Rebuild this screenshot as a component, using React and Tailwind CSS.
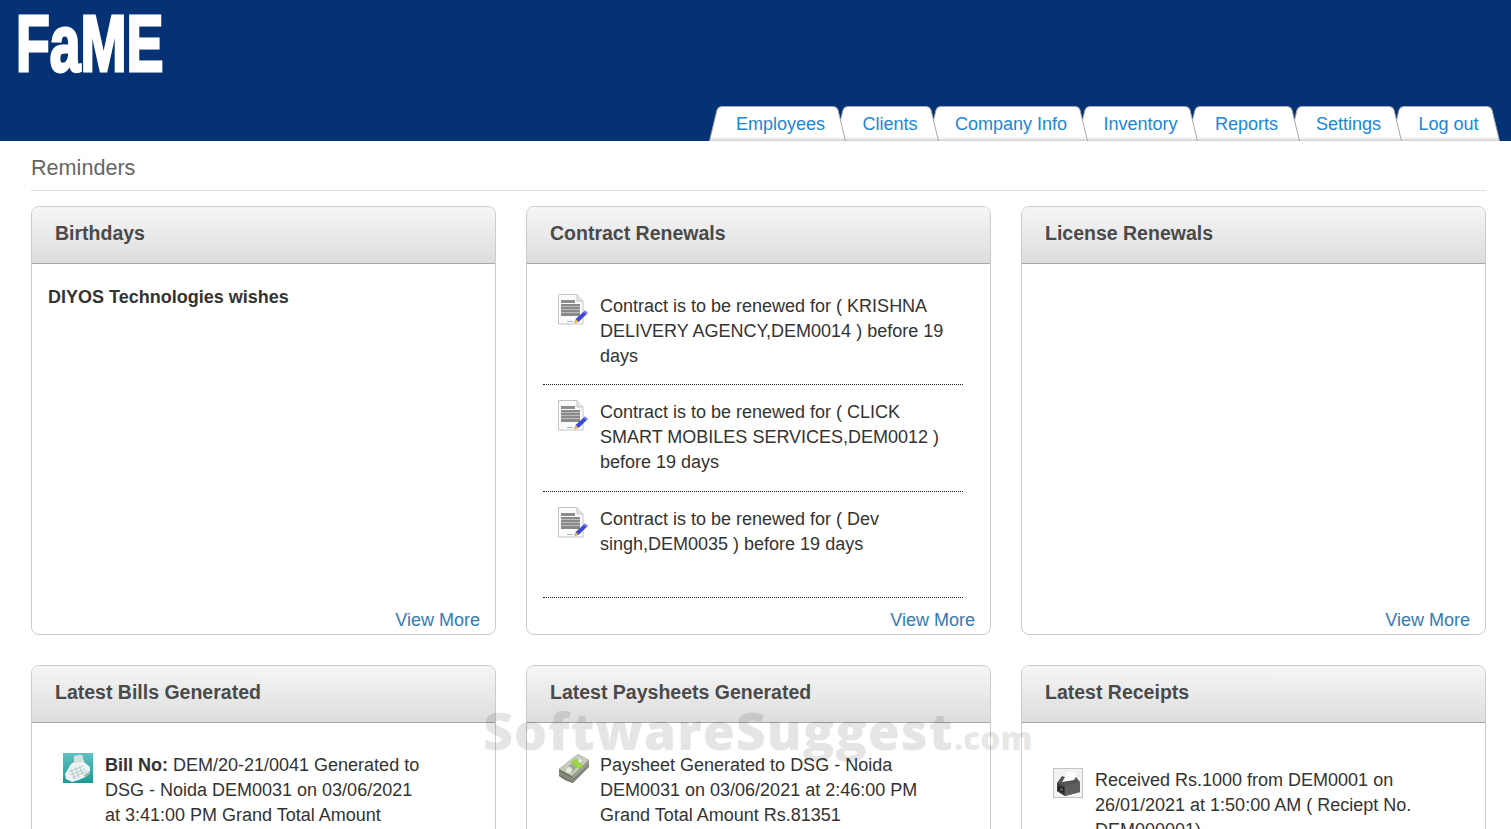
const TABS = [
  { id: "employees", label: "Employees", width: 137, z: "z-[7]" },
  { id: "clients", label: "Clients", width: 104, z: "z-[6]" },
  { id: "company", label: "Company Info", width: 160, z: "z-[5]" },
  { id: "inventory", label: "Inventory", width: 121, z: "z-[4]" },
  { id: "reports", label: "Reports", width: 113, z: "z-[3]" },
  { id: "settings", label: "Settings", width: 113, z: "z-[2]" },
  { id: "logout", label: "Log out", width: 109, z: "z-[1]" },
]

function Tab({ id, label, width, z }) {
  const h = 35
  const d = `M0.5 ${h} L8 4 Q9 0.5 13 0.5 L${width - 13} 0.5 Q${width - 9} 0.5 ${width - 8} 4 L${width - 0.5} ${h}`
  return (
    <div className={`relative flex h-[35px] items-center justify-center pl-[6px] pt-[2px] not-first:-ml-[11px] ${z}`} style={{ width }}>
      <svg className="absolute inset-0" width={width} height={h}>
        <defs>
          <linearGradient id={`tab-${id}`} x1="0" y1="0" x2="0" y2="1">
            <stop offset="0.88" stopColor="#ffffff" />
            <stop offset="1" stopColor="#cfcfcf" />
          </linearGradient>
        </defs>
        <path d={`${d} Z`} fill={`url(#tab-${id})`} />
        <path d={d} fill="none" stroke="#a9a9a9" strokeWidth="1" />
      </svg>
      <a className="relative text-[18px] leading-[25px] text-[#1a87d8]">{label}</a>
    </div>
  )
}

function DocIcon() {
  return (
    <svg width="30" height="31" viewBox="0 0 30 31" className="shrink-0">
      <path d="M0.5 0.5H19L25 7V30H0.5Z" fill="#fbfbfb" stroke="#c4c4c4" />
      <path d="M19 0.5V7H25" fill="#e6e6e6" stroke="#c4c4c4" />
      <rect x="3" y="6" width="14" height="3" fill="#8d8d8d" />
      <rect x="3" y="10" width="19" height="12" fill="#8a8a8a" />
      <path d="M3 12.5H22M3 15.5H22M3 18.5H22" stroke="#c8c8c8" strokeWidth="0.8" />
      <path d="M17.5 25L27 16.5L29.8 19L20.5 28Z" fill="#3b49d6" />
      <path d="M27 16.5L29.8 19L28.3 20.3L25.6 17.8Z" fill="#7f88ec" />
      <path d="M17.5 25L20.5 28L16 29.5Z" fill="#e0b040" />
      <path d="M9 27.5H15" stroke="#a8b4e0" strokeWidth="1" />
    </svg>
  )
}

function CalcIcon() {
  return (
    <svg width="30" height="30" viewBox="0 0 30 30" className="shrink-0">
      <defs>
        <linearGradient id="calc-bg" x1="0" y1="0" x2="0" y2="1">
          <stop offset="0" stopColor="#62c2c2" />
          <stop offset="1" stopColor="#1b9a92" />
        </linearGradient>
      </defs>
      <rect width="30" height="30" fill="url(#calc-bg)" />
      <path d="M11 3L19 2L21 9L27 14L27 20Q22 26 9 29L3 26L2 21L8 11L11 9Z" fill="#eef4f4" />
      <path d="M11 3L19 2L21 9L11 10Z" fill="#d5e2e2" />
      <path d="M6 19L20 13M7 22L22 16M9 25L24 18M8 16L12 26M12 14L16 25M16 13L20 22" stroke="#b4c6c6" strokeWidth="1" />
      <path d="M21 22L27 18V20L22 25Z" fill="#9fb4b4" />
    </svg>
  )
}

function MoneyIcon() {
  return (
    <svg width="32" height="31" viewBox="0 0 32 31" className="shrink-0">
      <path d="M1 16L20 1L31 7V14L15 30Q7 28 1 23Z" fill="#6f7467" />
      <path d="M1 16L20 1L31 7L14 23Z" fill="#c6ccbc" />
      <path d="M7 16L19 6L25 9L13 20Z" fill="#a3aa98" />
      <circle cx="11" cy="17" r="3" fill="#e6e9de" />
      <circle cx="22" cy="8" r="2" fill="#e6e9de" />
      <path d="M13 9L17 6L27 14L23 18Z" fill="#9ad83c" />
      <path d="M14 23L31 7V10L15 26Z" fill="#989d8e" />
      <path d="M1 19L14 26L31 11M1 21L15 28L31 13" stroke="#a9ae9f" strokeWidth="0.7" fill="none" />
    </svg>
  )
}

function PrinterIcon() {
  return (
    <svg width="30" height="30" viewBox="0 0 30 30" className="shrink-0">
      <rect x="0.5" y="0.5" width="29" height="29" fill="#f2f2f2" stroke="#c4c4c4" />
      <path d="M14 3L23 5L21 13L11 14Z" fill="#ffffff" />
      <path d="M4 15L9 8L12 9L9 14L21 12L23 9L27 14V24L12 28L4 23Z" fill="#555555" />
      <path d="M4 15L12 18V28L4 23Z" fill="#3d3d3d" />
      <path d="M12 18L27 14V24L12 28Z" fill="#5f5f5f" />
      <path d="M5 18L11 20V25L5 22Z" fill="#1f1f1f" />
      <path d="M7 20L10 21V23L7 22Z" fill="#6a6a6a" />
    </svg>
  )
}

function Card({ title, children, viewMore }) {
  return (
    <div className="flex h-[429px] flex-col overflow-hidden rounded-lg border border-[#cccccc]">
      <div className="h-[57px] shrink-0 border-b border-[#a8a8a8] bg-gradient-to-b from-[#f6f6f6] to-[#dddddd] pl-[23px] pt-[14px] text-[19.5px] font-bold leading-[25px] text-[#4a4a4a]">
        {title}
      </div>
      <div className="flex-1">{children}</div>
      {viewMore && (
        <a className="self-end pb-[1px] pr-[15px] text-[18px] leading-[25px] text-[#337ab7]">View More</a>
      )}
    </div>
  )
}

function ContractRow({ size, children }) {
  return (
    <div className={`flex gap-3 border-b border-dotted border-[#222222] pl-[15px] ${size}`}>
      <DocIcon />
      <p className="w-[355px]">{children}</p>
    </div>
  )
}

export default function App() {
  return (
    <div className="relative h-[829px] w-full overflow-hidden bg-white font-['Liberation_Sans',Arial,sans-serif] text-[18px] leading-[25px] text-[#333333]">
      <header className="flex h-[141px] items-end justify-between bg-[#053175] pr-[11px]">
        <div className="h-full pl-[16px] pt-[5px]">
          <span className="block origin-left scale-x-[0.7] text-[79px] font-bold leading-[78px] text-white [-webkit-text-stroke:3px_white]">
            FaME
          </span>
        </div>
        <nav className="flex">
          {TABS.map((tab) => (
            <Tab key={tab.id} {...tab} />
          ))}
        </nav>
      </header>

      <main className="pl-[31px] pr-[25px]">
        <h1 className="flex h-[50px] items-end border-b border-[#dddddd] pb-[7px] text-[21.6px] font-normal leading-[30px] text-[#666666]">
          Reminders
        </h1>

        <div className="mt-[15px] grid grid-cols-3 gap-[30px]">
          <Card title="Birthdays" viewMore>
            <p className="pl-[16px] pt-[21px] font-bold">DIYOS Technologies wishes</p>
          </Card>

          <Card title="Contract Renewals" viewMore>
            <div className="ml-[16px] mr-[27px] pt-[14px]">
              <ContractRow size="h-[107px] pt-[16px]">Contract is to be renewed for ( KRISHNA DELIVERY AGENCY,DEM0014 ) before 19 days</ContractRow>
              <ContractRow size="h-[107px] pt-[15px]">Contract is to be renewed for ( CLICK SMART MOBILES SERVICES,DEM0012 ) before 19 days</ContractRow>
              <ContractRow size="h-[106px] pt-[15px]">Contract is to be renewed for ( Dev singh,DEM0035 ) before 19 days</ContractRow>
            </div>
          </Card>

          <Card title="License Renewals" viewMore />

          <Card title="Latest Bills Generated">
            <div className="flex gap-3 pl-[31px] pt-[30px]">
              <CalcIcon />
              <p className="w-[320px]">
                <b>Bill No:</b> DEM/20-21/0041 Generated to DSG - Noida DEM0031 on 03/06/2021 at 3:41:00 PM Grand Total Amount
              </p>
            </div>
          </Card>

          <Card title="Latest Paysheets Generated">
            <div className="flex gap-[10px] pl-[31px] pt-[30px]">
              <MoneyIcon />
              <p className="w-[330px]">Paysheet Generated to DSG - Noida DEM0031 on 03/06/2021 at 2:46:00 PM Grand Total Amount Rs.81351</p>
            </div>
          </Card>

          <Card title="Latest Receipts">
            <div className="flex gap-3 pl-[31px] pt-[45px]">
              <PrinterIcon />
              <p className="w-[330px]">Received Rs.1000 from DEM0001 on 26/01/2021 at 1:50:00 AM ( Reciept No. DEM000001)</p>
            </div>
          </Card>
        </div>
      </main>

      {/* watermark over the page */}
      <div className="pointer-events-none absolute left-[483px] top-[696px] font-['Open_Sans',sans-serif] text-[52px] font-extrabold leading-[68px] tracking-[1px] text-black/10">
        SoftwareSuggest<span className="text-[32px] tracking-normal">.com</span>
      </div>
    </div>
  )
}
